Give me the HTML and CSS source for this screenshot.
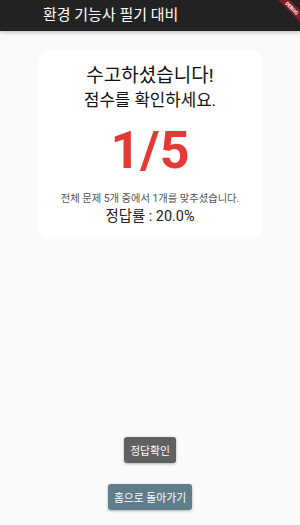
FILE: index.html
```html
<!DOCTYPE html>
<html lang="ko">
<head>
    <meta charset="UTF-8">
    <meta name="viewport" content="width=device-width, initial-scale=1.0">
    <title>환경 기능사 필기 대비</title>
    <link rel="stylesheet" href="styles.css">
</head>
<body>

    <header class="app-bar">
        <h1>환경 기능사 필기 대비</h1>
        <div class="debug-ribbon">DEBUG</div>
    </header>

    <main class="page">
        <section class="result-card">
            <p class="title">수고하셨습니다!</p>
            <p class="subtitle">점수를 확인하세요.</p>
            <p class="score">1/5</p>
            <p class="summary">전체 문제 5개 중에서 1개를 맞추셨습니다.</p>
            <p class="rate">정답률 : 20.0%</p>
        </section>

        <div class="actions">
            <button class="btn btn-check">정답확인</button>
            <button class="btn btn-home">홈으로 돌아가기</button>
        </div>
    </main>

</body>
</html>
```

FILE: styles.css
```css
* {
    box-sizing: border-box;
}
html, body {
    height: 100%;
}
body {
    margin: 0;
    font-family: Roboto, "Noto Sans CJK KR", sans-serif;
    background-color: #fafafa;
    display: flex;
    flex-direction: column;
    overflow: hidden;
}
.app-bar {
    position: relative;
    height: 31px;
    background-color: #222222;
    box-shadow: 0 1px 4px rgba(0, 0, 0, 0.3);
    overflow: hidden;
    flex-shrink: 0;
}
.app-bar h1 {
    margin: 0;
    padding-left: 43px;
    font-size: 15px;
    font-weight: 400;
    line-height: 30px;
    color: #ffffff;
}
.debug-ribbon {
    position: absolute;
    top: 4px;
    right: -14px;
    width: 44px;
    transform: rotate(45deg);
    background-color: #8b1a2a;
    color: #ffffff;
    font-size: 5px;
    font-weight: 700;
    text-align: center;
    line-height: 8px;
}
.page {
    flex: 1;
    display: flex;
    flex-direction: column;
    align-items: center;
    padding: 19px 38px 15px;
}
.result-card {
    width: 100%;
    background-color: #ffffff;
    border-radius: 12px;
    padding: 13px 8px 12px;
    text-align: center;
}
.result-card p {
    margin: 0;
}
.title {
    font-size: 19px;
    line-height: 26px;
    color: #111111;
}
.subtitle {
    font-size: 16.8px;
    line-height: 22px;
    color: #111111;
}
.score {
    font-size: 52px;
    font-weight: 700;
    line-height: 70px;
    color: #e53935;
    margin-top: 5px !important;
}
.summary {
    font-size: 10.3px;
    line-height: 16px;
    color: #555555;
    margin-top: 5px !important;
}
.rate {
    font-size: 14.4px;
    font-weight: 400;
    line-height: 20px;
    color: #222222;
}
.actions {
    margin-top: auto;
    display: flex;
    flex-direction: column;
    align-items: center;
    gap: 21px;
}
.btn {
    height: 26px;
    padding: 0 6px;
    border: none;
    border-radius: 3px;
    color: #ffffff;
    font-family: Roboto, "Noto Sans CJK KR", sans-serif;
    font-size: 10.8px;
    box-shadow: 0 1px 3px rgba(0, 0, 0, 0.3);
    cursor: pointer;
}
.btn-check {
    background-color: #616161;
}
.btn-home {
    background-color: #607d8b;
}
```
